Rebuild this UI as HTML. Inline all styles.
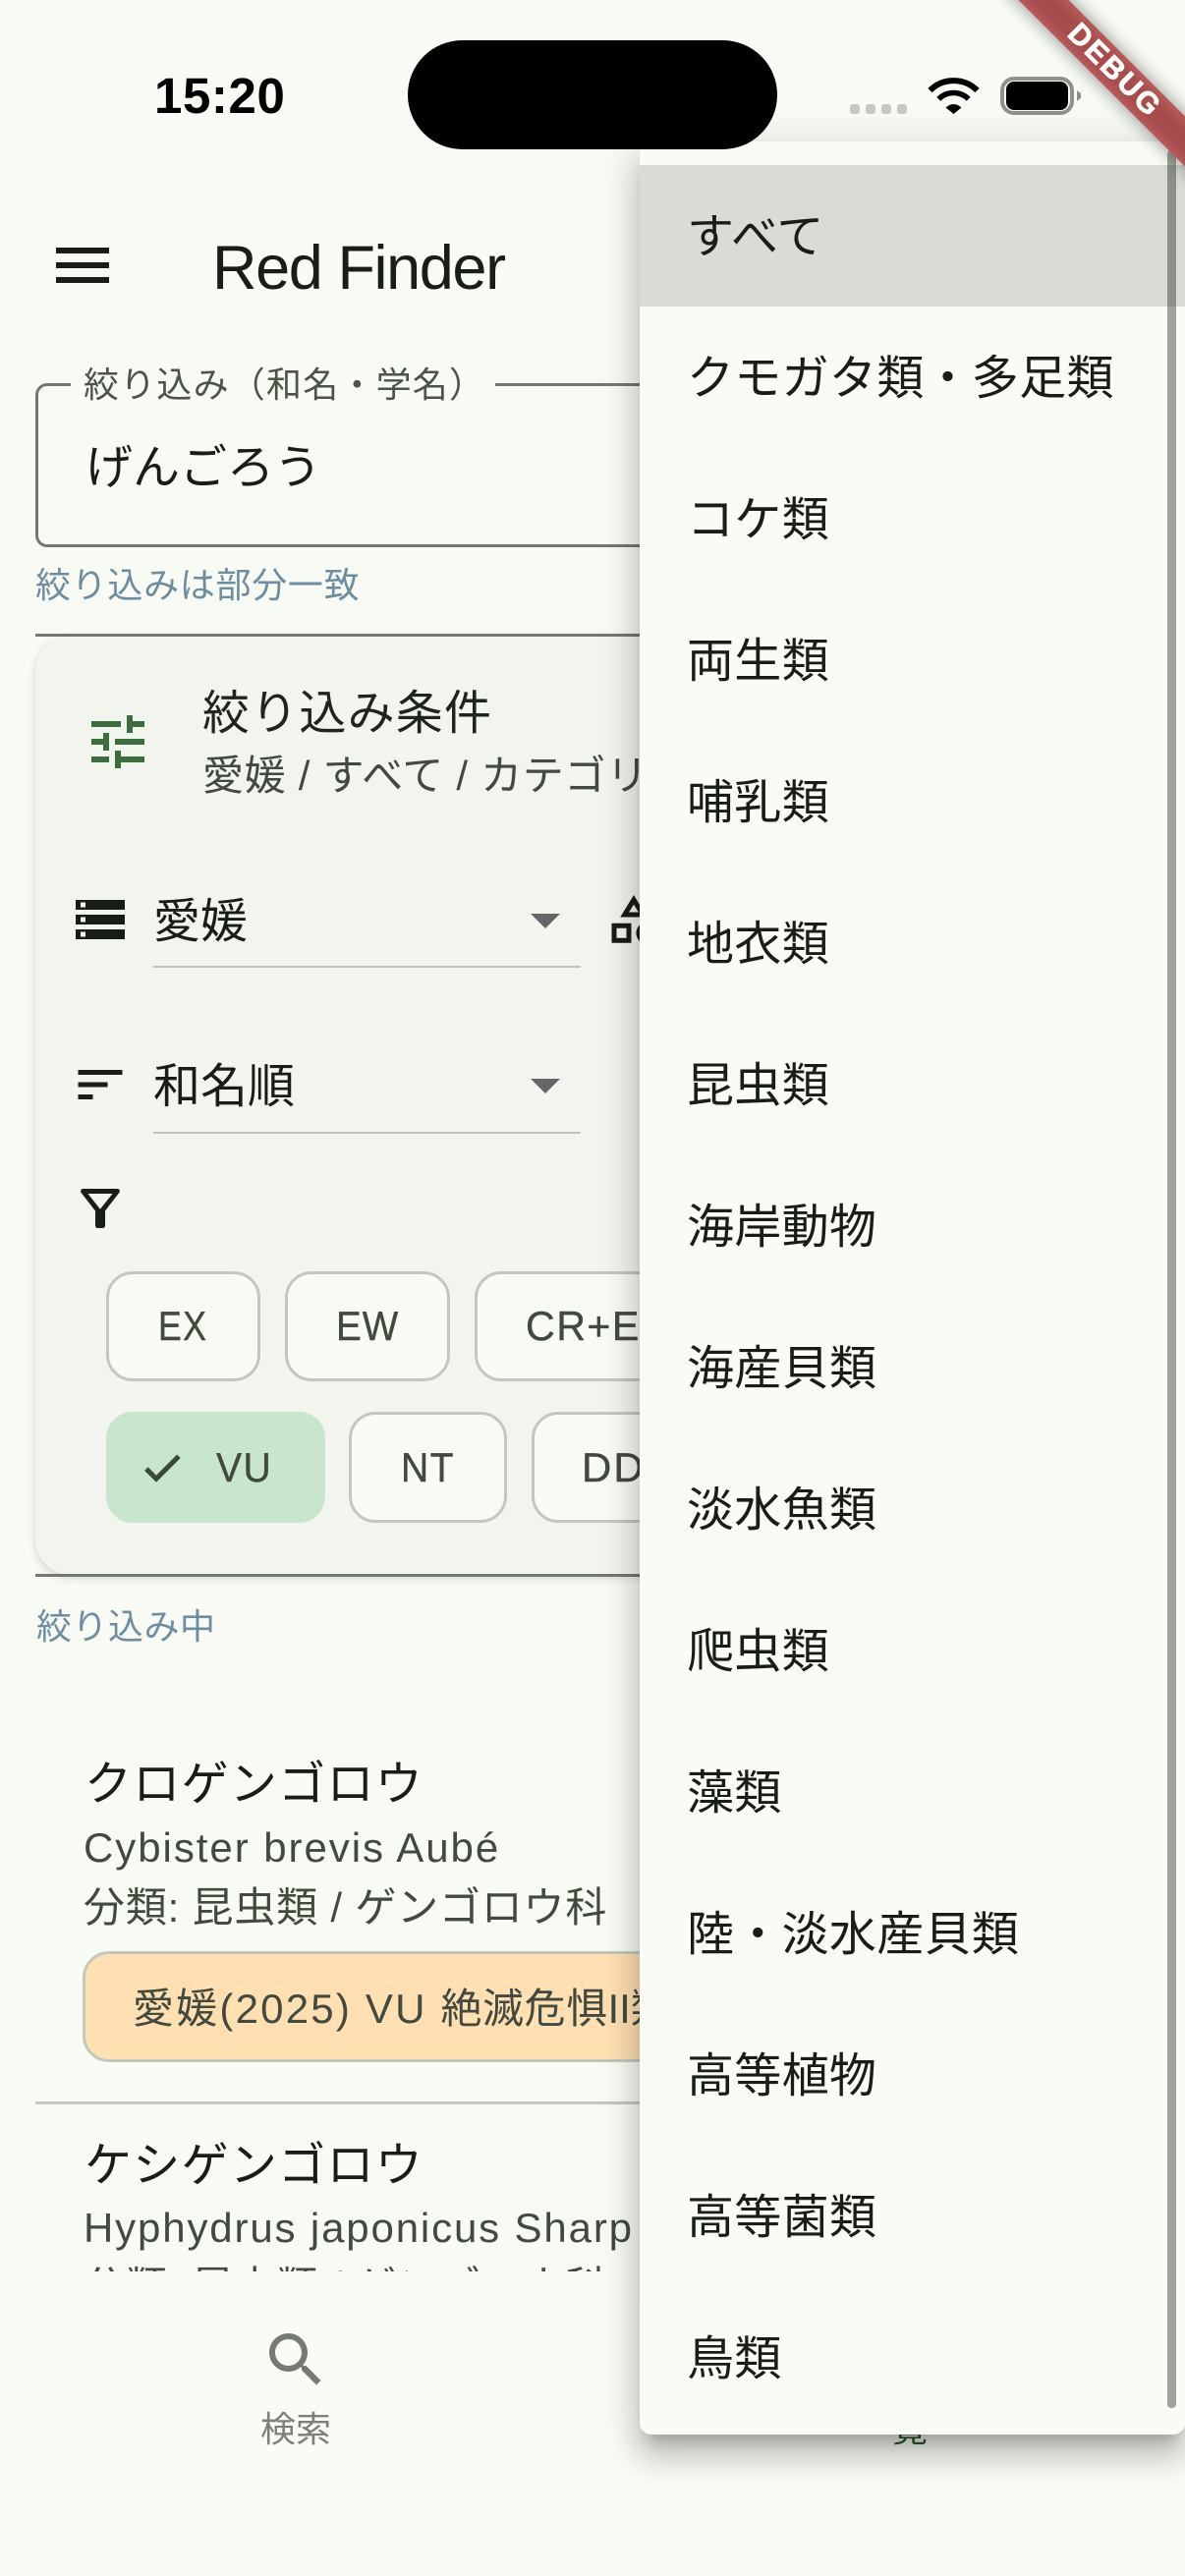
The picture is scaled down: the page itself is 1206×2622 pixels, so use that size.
<!DOCTYPE html>
<html lang="ja">
<head>
<meta charset="utf-8">
<title>Red Finder</title>
<style>
html,body{margin:0;padding:0;background:#f8fbf3;}
#p{position:relative;width:1206px;height:2622px;overflow:hidden;background:#f8fbf3;font-family:"Liberation Sans","Noto Sans CJK JP",sans-serif;color:#191d17;}
.a{position:absolute;}
.t{position:absolute;white-space:nowrap;line-height:60px;height:60px;}
.s48{font-size:48px;color:#191d17;}
.s42{font-size:42px;color:#42493f;letter-spacing:1.8px;}
.s36{font-size:36px;}
.help{color:#6d8da3;letter-spacing:.7px;}
.chip{position:absolute;box-sizing:border-box;background:#f8fbf3;border:3px solid #c2c8bd;border-radius:27px;}
.c{-webkit-text-stroke:.4px #42493f;transform-origin:left center;}
.line{position:absolute;height:3px;background:#72796f;}
.ul{position:absolute;height:2px;background:#bfc1bc;left:156px;width:435px;}
.tri{position:absolute;width:0;height:0;border-left:15px solid transparent;border-right:15px solid transparent;border-top:15px solid #666;left:540px;}
svg{position:absolute;overflow:visible;}
#menu{position:absolute;left:651px;top:144px;width:555px;height:2334px;background:#f9fcf4;border-radius:12px;box-shadow:0 15px 15px -9px rgba(0,0,0,.2),0 24px 30px 3px rgba(0,0,0,.14),0 9px 42px 6px rgba(0,0,0,.12);}
#menu .t{left:48px;font-size:48px;color:#191d17;letter-spacing:.3px;}
</style>
</head>
<body>
<div id="p">

<!-- status bar -->
<div class="t" style="left:157px;top:68px;font-size:51px;font-weight:700;color:#000;letter-spacing:.6px;">15:20</div>
<div class="a" style="left:415px;top:41px;width:376px;height:111px;background:#000;border-radius:56px;z-index:30;"></div>
<div class="a" style="left:865px;top:106px;width:10px;height:10px;background:#c6c8c2;border-radius:3px;"></div>
<div class="a" style="left:881px;top:106px;width:10px;height:10px;background:#c6c8c2;border-radius:3px;"></div>
<div class="a" style="left:897px;top:106px;width:10px;height:10px;background:#c6c8c2;border-radius:3px;"></div>
<div class="a" style="left:913px;top:106px;width:10px;height:10px;background:#c6c8c2;border-radius:3px;"></div>
<svg style="left:945px;top:79px;" width="51" height="37" viewBox="0 0 51 37">
<path d="M25.5 37L17.5 30.5Q25.5 23.5 33.5 30.5Z" fill="#000"/>
<path d="M10.3 21.8A21.5 21.5 0 0 1 40.7 21.8" fill="none" stroke="#000" stroke-width="5.5"/>
<path d="M1.5 13A34 34 0 0 1 49.5 13" fill="none" stroke="#000" stroke-width="6"/>
</svg>
<div class="a" style="left:1018px;top:78px;width:75px;height:39px;box-sizing:border-box;border:4px solid #8f928b;border-radius:14px;"></div>
<div class="a" style="left:1024px;top:83px;width:63px;height:29px;background:#000;border-radius:8px;"></div>
<svg style="left:1096px;top:92px;" width="4" height="11" viewBox="0 0 4 11"><path d="M0 0L4 3V8L0 11Z" fill="#8f928b"/></svg>

<!-- app bar -->
<div class="a" style="left:57px;top:252px;width:54px;height:6px;background:#191d17;"></div>
<div class="a" style="left:57px;top:267px;width:54px;height:6px;background:#191d17;"></div>
<div class="a" style="left:57px;top:282px;width:54px;height:6px;background:#191d17;"></div>
<div class="t" style="left:216px;top:238px;font-size:63px;line-height:70px;height:70px;color:#191d17;letter-spacing:-1.4px;">Red Finder</div>

<!-- search field -->
<div class="a" style="left:36px;top:390px;width:1134px;height:167px;box-sizing:border-box;border:3px solid #72796f;border-radius:12px;"></div>
<div class="a" style="left:72px;top:385px;width:432px;height:12px;background:#f8fbf3;"></div>
<div class="t s36" style="left:85px;top:362px;color:#4c5349;letter-spacing:1.2px;">絞り込み（和名・学名）</div>
<div class="t s48" style="left:87px;top:447px;">げんごろう</div>
<div class="t s36 help" style="left:36px;top:566px;">絞り込みは部分一致</div>

<!-- filter card -->
<div class="a" style="left:36px;top:647px;width:1134px;height:956px;background:#f2f5ee;border-radius:36px;box-shadow:0 3px 9px rgba(0,0,0,.16);"></div>
<div class="line" style="left:36px;top:645px;width:1134px;"></div>
<div class="line" style="left:36px;top:1602px;width:1134px;"></div>

<svg style="left:84px;top:719px;" width="72" height="72" viewBox="0 0 24 24"><path fill="#3b6d3d" d="M3 17v2h6v-2H3zM3 5v2h10V5H3zm10 16v-2h8v-2h-8v-2h-2v6h2zM7 9v2H3v2h4v2h2V9H7zm14 4v-2H11v2h10zm-6-4h2V7h4V5h-4V3h-2v6z"/></svg>
<div class="t s48" style="left:206px;top:697px;letter-spacing:1.2px;color:#1f241d;">絞り込み条件</div>
<div class="t" style="left:206px;top:760px;font-size:42px;color:#42493f;letter-spacing:.7px;">愛媛 / すべて / カテゴリ: VU</div>

<svg style="left:72px;top:906px;" width="60" height="60" viewBox="0 0 24 24"><path fill="#191d17" d="M2 20h20v-4H2v4zm2-3h2v2H4v-2zM2 4v4h20V4H2zm4 3H4V5h2v2zm-4 7h20v-4H2v4zm2-3h2v2H4v-2z"/></svg>
<div class="t s48" style="left:156px;top:909px;">愛媛</div>
<div class="tri" style="top:930px;"></div>
<div class="ul" style="top:983px;"></div>
<svg style="left:615px;top:906px;" width="60" height="60" viewBox="0 0 24 24"><path fill="#191d17" d="M12 2l-5.5 9h11L12 2zm0 3.84L13.93 9h-3.87L12 5.84zM17.5 13c-2.49 0-4.5 2.01-4.5 4.5s2.01 4.5 4.5 4.5 4.5-2.01 4.5-4.5-2.01-4.5-4.5-4.5zm0 7c-1.38 0-2.5-1.12-2.5-2.5s1.12-2.5 2.5-2.5 2.5 1.12 2.5 2.5-1.12 2.5-2.5 2.5zM3 21.5h8v-8H3v8zm2-6h4v4H5v-4z"/></svg>

<svg style="left:72px;top:1074px;" width="60" height="60" viewBox="0 0 24 24"><path fill="#191d17" d="M3 18h6v-2H3v2zM3 6v2h18V6H3zm0 7h12v-2H3v2z"/></svg>
<div class="t s48" style="left:156px;top:1077px;">和名順</div>
<div class="tri" style="top:1098px;"></div>
<div class="ul" style="top:1152px;"></div>

<svg style="left:72px;top:1200px;" width="60" height="60" viewBox="0 0 24 24"><path fill="#191d17" d="M7 6h10l-5.01 6.3L7 6zM4.25 5.61C6.27 8.2 10 13 10 13v6c0 .55.45 1 1 1h2c.55 0 1-.45 1-1v-6s3.72-4.8 5.74-7.39C20.25 4.95 19.78 4 18.95 4H5.04C4.21 4 3.74 4.95 4.25 5.61z"/></svg>

<div class="chip" style="left:108px;top:1294px;width:157px;height:112px;"></div>
<div class="t s42 c" style="left:161px;top:1320px;letter-spacing:1.5px;transform:scaleX(.85);">EX</div>
<div class="chip" style="left:290px;top:1294px;width:168px;height:112px;"></div>
<div class="t s42 c" style="left:342px;top:1320px;letter-spacing:1px;transform:scaleX(.92);">EW</div>
<div class="chip" style="left:483px;top:1294px;width:300px;height:112px;"></div>
<div class="t s42 c" style="left:535px;top:1320px;letter-spacing:1.5px;transform:scaleX(.98);">CR+EN</div>

<div class="chip" style="left:108px;top:1437px;width:223px;height:113px;background:#c8e6cc;border-color:#c8e6cc;"></div>
<svg style="left:141px;top:1470px;" width="48" height="48" viewBox="0 0 24 24"><path fill="#3a4a3a" stroke="#3a4a3a" stroke-width=".5" d="M9 16.17L4.83 12l-1.42 1.41L9 19 21 7l-1.41-1.41z"/></svg>
<div class="t s42 c" style="left:220px;top:1464px;letter-spacing:1.5px;transform:scaleX(.93);">VU</div>
<div class="chip" style="left:355px;top:1437px;width:161px;height:113px;"></div>
<div class="t s42 c" style="left:408px;top:1464px;letter-spacing:1.5px;transform:scaleX(.93);">NT</div>
<div class="chip" style="left:541px;top:1437px;width:200px;height:113px;"></div>
<div class="t s42 c" style="left:592px;top:1464px;letter-spacing:2px;">DD</div>

<div class="t s36 help" style="left:37px;top:1626px;letter-spacing:.5px;">絞り込み中</div>

<!-- list -->
<div class="a" style="left:0;top:1660px;width:1206px;height:652px;overflow:hidden;">
  <div class="t s48" style="left:86px;top:127px;letter-spacing:1.3px;">クロゲンゴロウ</div>
  <div class="t s42" style="left:85px;top:191px;letter-spacing:1.95px;">Cybister brevis Aubé</div>
  <div class="t" style="left:85px;top:252px;font-size:42px;color:#42493f;letter-spacing:.8px;">分類: 昆虫類 / ゲンゴロウ科</div>
  <div class="chip" style="left:84px;top:326px;width:900px;height:113px;background:#ffe0b2;"></div>
  <div class="t s42" style="left:135px;top:355px;letter-spacing:2.2px;">愛媛(2025) VU <span style="letter-spacing:.5px;">絶滅危惧</span><span style="letter-spacing:0;">II類</span></div>
  <div class="a" style="left:36px;top:479px;width:1134px;height:3px;background:#c2c8bd;"></div>
  <div class="t s48" style="left:86px;top:515px;letter-spacing:1.3px;">ケシゲンゴロウ</div>
  <div class="t s42" style="left:85px;top:578px;letter-spacing:1.85px;">Hyphydrus japonicus Sharp</div>
  <div class="t" style="left:85px;top:638px;font-size:42px;color:#42493f;letter-spacing:.8px;">分類: 昆虫類 / ゲンゴロウ科</div>
</div>

<!-- bottom nav -->
<div class="a" style="left:0;top:2346px;width:1206px;height:276px;background:#f9fbf4;"></div>
<svg style="left:265px;top:2366px;" width="72" height="72" viewBox="0 0 24 24"><path fill="#767a75" d="M15.5 14h-.79l-.28-.27C15.41 12.59 16 11.11 16 9.5 16 5.91 13.09 3 9.5 3S3 5.91 3 9.5 5.91 16 9.5 16c1.61 0 3.09-.59 4.23-1.57l.27.28v.79l5 4.99L20.49 19l-4.99-5zm-6 0C7.01 14 5 11.99 5 9.5S7.01 5 9.5 5 14 7.01 14 9.5 11.99 14 9.5 14z"/></svg>
<div class="t s36" style="left:265px;top:2443px;color:#7c807a;">検索</div>
<div class="t s36" style="left:872px;top:2443px;color:#2d5a30;">一覧</div>

<!-- dropdown menu -->
<div id="menu">
  <div class="a" style="left:0;top:24px;width:555px;height:144px;background:#d9dcd6;"></div>
  <div class="t" style="top:68px;">すべて</div>
  <div class="t" style="top:212px;">クモガタ類・多足類</div>
  <div class="t" style="top:356px;">コケ類</div>
  <div class="t" style="top:500px;">両生類</div>
  <div class="t" style="top:644px;">哺乳類</div>
  <div class="t" style="top:788px;">地衣類</div>
  <div class="t" style="top:932px;">昆虫類</div>
  <div class="t" style="top:1076px;">海岸動物</div>
  <div class="t" style="top:1220px;">海産貝類</div>
  <div class="t" style="top:1364px;">淡水魚類</div>
  <div class="t" style="top:1508px;">爬虫類</div>
  <div class="t" style="top:1652px;">藻類</div>
  <div class="t" style="top:1796px;">陸・淡水産貝類</div>
  <div class="t" style="top:1940px;">高等植物</div>
  <div class="t" style="top:2084px;">高等菌類</div>
  <div class="t" style="top:2228px;">鳥類</div>
  <div class="a" style="left:537px;top:9px;width:9px;height:2298px;background:rgba(25,29,23,.4);border-radius:4px;"></div>
</div>

<!-- debug banner -->
<div class="a" style="left:962px;top:52px;width:340px;height:36px;box-sizing:border-box;padding-left:6px;background:linear-gradient(#b65a5a,#a84b4b 30%,#a84b4b 70%,#b65a5a);box-shadow:0 0 18px rgba(0,0,0,.45);transform:rotate(45deg);transform-origin:170px 18px;color:#fff;font-weight:700;font-size:30px;line-height:36px;text-align:center;letter-spacing:2.5px;-webkit-text-stroke:.8px #fff;z-index:40;">DEBUG</div>

</div>
</body>
</html>
